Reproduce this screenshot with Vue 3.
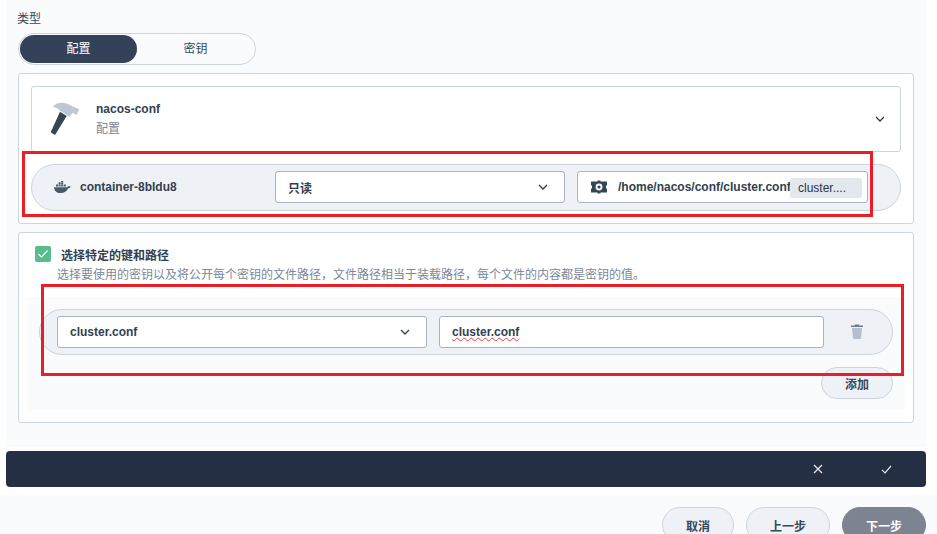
<script setup>
const desc = '选择要使用的密钥以及将公开每个密钥的文件路径，文件路径相当于装载路径，每个文件的内容都是密钥的值。'
</script>

<template>
  <div class="page">
    <div class="panel">
      <div class="label">类型</div>
      <div class="switch">
        <div class="seg on">配置</div>
        <div class="seg">密钥</div>
      </div>

      <section class="card first">
        <div class="head">
          <svg class="hammer" width="32" height="36" viewBox="0 0 32 36">
            <path d="M2.700 5.700 C5 3 8.500 1.700 11.700 1.700 C15.500 1.700 19 3 21.700 5 L29.300 8.300 L26.700 14 L22.700 11.700 L19.300 15.700 L10 9.700 C8 7.500 5.500 6 2.700 5.700Z" fill="#bdc8d4"/>
            <path d="M10 10.700 L16.700 15 L5 34 L0.700 31.300Z" fill="#344554"/>
          </svg>
          <div class="titles">
            <div class="name">nacos-conf</div>
            <div class="kind">配置</div>
          </div>
          <svg class="chev far" width="10" height="6" viewBox="0 0 10 6"><path d="M1 1 L5 5 L9 1" /></svg>
        </div>

        <div class="row mount">
          <svg class="docker" width="17" height="12" viewBox="0 0 17 12">
            <path d="M0 6.200 H13.200 C13.500 5.200 14.800 4.900 16.800 5.500 C16 7 15 7.400 14 7.500 C12.800 10.400 10.300 12 6.600 12 C2.600 12 0.400 10 0 6.200Z" fill="#4a5868"/>
            <path d="M2 3.600h2v2H2zM4.600 3.600h2v2h-2zM7.200 3.600h2v2h-2zM9.800 3.600h2v2h-2zM4.600 1.200h2v2h-2zM7.200 1.200h2v2h-2zM7.200 -1h2v2h-2z" fill="#4a5868"/>
          </svg>
          <div class="cname">container-8bldu8</div>
          <div class="field sel access">
            <span>只读</span>
            <svg class="chev" width="10" height="6" viewBox="0 0 10 6"><path d="M1 1 L5 5 L9 1" /></svg>
          </div>
          <div class="field path">
            <svg class="gear" width="16" height="14" viewBox="0 0 16 14">
              <path fill-rule="evenodd" d="M0 1.500H6.500V0.500H9.500V1.500H16V5.500H15V8.500H16V12.500H9.500V13.500H6.500V12.500H0V8.500H1V5.500H0ZM8 3.600A3.400 3.400 0 1 0 8 10.400A3.400 3.400 0 1 0 8 3.600ZM8 5.400A1.600 1.600 0 1 1 8 8.600A1.600 1.600 0 1 1 8 5.400Z" fill="#344554"/>
            </svg>
            <span class="ptext">/home/nacos/conf/cluster.conf</span>
            <span class="tag">cluster....</span>
          </div>
        </div>
      </section>

      <section class="card second">
        <div class="check-row">
          <span class="check">
            <svg width="12" height="10" viewBox="0 0 12 10"><path d="M1.500 5 L4.500 8 L10.500 1.500" /></svg>
          </span>
          <span class="check-label">选择特定的键和路径</span>
        </div>
        <div class="desc">{{ desc }}</div>
        <div class="sub">
          <div class="row keyrow">
            <div class="field sel key">
              <span>cluster.conf</span>
              <svg class="chev" width="10" height="6" viewBox="0 0 10 6"><path d="M1 1 L5 5 L9 1" /></svg>
            </div>
            <div class="field file"><span class="squiggle">cluster.conf</span></div>
            <svg class="trash" width="12" height="15" viewBox="0 0 12 15">
              <path d="M4.200 0.500H7.800L8.300 1.600H12V3H0V1.600H3.700Z" fill="#6e7a87"/>
              <path d="M1 4H11L10 14C10 14.600 9.500 15 9 15H3C2.500 15 2 14.600 2 14Z" fill="#b4bfcb"/>
            </svg>
          </div>
          <div class="add-line"><button class="btn add">添加</button></div>
        </div>
      </section>
    </div>

    <div class="bar">
      <svg class="bar-x" width="10" height="10" viewBox="0 0 10 10"><path d="M1 1 L9 9 M9 1 L1 9" /></svg>
      <svg class="bar-ok" width="11" height="9" viewBox="0 0 11 9"><path d="M1 4.800 L4 7.800 L10 1" /></svg>
    </div>

    <div class="footer">
      <button class="btn cancel">取消</button>
      <button class="btn prev">上一步</button>
      <button class="btn next">下一步</button>
    </div>

    <div class="mark mark-a"></div>
    <div class="mark mark-b"></div>
  </div>
</template>

<style>
html, body { margin: 0; background: #fff; overflow: hidden; }
</style>

<style scoped>
.page {
  position: relative;
  width: 937px;
  height: 534px;
  overflow: hidden;
  background: #fff;
  font-family: "Liberation Sans", "Noto Sans CJK SC", sans-serif;
  color: #2a3646;
}
.panel {
  margin: 0 11px 0 6px;
  height: 447px;
  box-sizing: border-box;
  padding: 12px 12px 0;
  background: #fafbfd;
}
.label { font-size: 12px; line-height: 14px; height: 14px; margin-left: -1px; color: #3a4757; }
.switch {
  display: flex;
  box-sizing: border-box;
  width: 238px;
  height: 32px;
  margin-top: 7px;
  padding: 1px;
  border: 1px solid #ccd4de;
  border-radius: 16px;
}
.seg {
  width: 117px;
  font-size: 12px;
  line-height: 28px;
  text-align: center;
  color: #3a4757;
  border-radius: 14px;
}
.seg.on { background: #344259; color: #fff; }
.card {
  box-sizing: border-box;
  width: 896px;
  background: #fff;
  border: 1px solid #ccd4de;
  border-radius: 3px;
}
.first { height: 151px; margin-top: 8px; padding: 12px; }
.second { height: 191px; margin-top: 8px; padding: 13px 8px 0; }
.head {
  display: flex;
  align-items: center;
  box-sizing: border-box;
  height: 66px;
  padding: 0 15px 0 18px;
  border: 1px solid #ccd4de;
  border-radius: 3px;
}
.hammer { flex: none; }
.titles { margin-left: 14px; flex: 1; margin-top: -1px; }
.name { font-size: 12px; line-height: 16px; font-weight: 700; color: #323f50; }
.kind { font-size: 12px; line-height: 16px; margin-top: 4px; color: #7c8798; }
.chev { fill: none; stroke: #2f3c4c; stroke-width: 1.3; flex: none; }
.row {
  display: flex;
  align-items: center;
  box-sizing: border-box;
  height: 46px;
  background: #eef2f7;
  border: 1px solid #ccd4de;
  border-radius: 23px;
}
.mount { margin-top: 12px; height: 47px; border-radius: 24px; padding: 0 32px 1px 22px; }
.docker { flex: none; }
.cname { width: 195px; margin-left: 9px; font-size: 12px; font-weight: 700; color: #323f50; }
.field {
  display: flex;
  align-items: center;
  box-sizing: border-box;
  height: 32px;
  background: #fff;
  border: 1px solid #a9b2c0;
  border-radius: 3px;
  font-size: 12px;
  font-weight: 700;
  color: #323f50;
}
.sel { justify-content: space-between; padding: 0 16px 0 12px; }
.access { width: 290px; }
.path { width: 291px; margin-left: 12px; padding-left: 13px; position: relative; overflow: hidden; }
.gear { flex: none; }
.ptext { margin-left: 11px; white-space: nowrap; }
.tag {
  position: absolute;
  left: 212px;
  top: 6px;
  width: 72px;
  height: 20px;
  box-sizing: border-box;
  padding-left: 8px;
  background: #e3e7ee;
  border-radius: 2px;
  font-weight: 400;
  line-height: 21px;
  color: #2a3646;
}
.check-row { display: flex; align-items: center; height: 16px; }
.check {
  display: flex;
  align-items: center;
  justify-content: center;
  width: 16px;
  height: 16px;
  background: #58bc8b;
  border-radius: 2px;
  margin-left: 8px;
}
.check svg { fill: none; stroke: #fff; stroke-width: 1.2; }
.check-label { margin-left: 10px; font-size: 12px; font-weight: 700; color: #323f50; }
.desc { margin: 5px 0 0 30px; font-size: 12px; line-height: 16px; color: #7c8798; white-space: nowrap; }
.sub {
  height: 113px;
  margin-top: 14px;
  box-sizing: border-box;
  padding: 12px 12px 0;
  background: #fafbfd;
  border-radius: 3px;
}
.keyrow { padding: 0 0 0 17px; }
.key { width: 370px; }
.file { width: 385px; margin-left: 12px; padding-left: 12px; }
.squiggle { text-decoration: underline wavy #e8403f 1px; text-underline-offset: 1px; }
.trash { margin-left: 27px; margin-top: -2px; flex: none; }
.add-line { display: flex; justify-content: flex-end; margin-top: 12px; }
.btn {
  box-sizing: border-box;
  height: 32px;
  padding: 0;
  background: #eef2f7;
  border: 1px solid #ccd4de;
  border-radius: 16px;
  font: 700 12px "Liberation Sans", "Noto Sans CJK SC", sans-serif;
  color: #3a4757;
}
.add { width: 72px; }
.bar {
  display: flex;
  align-items: center;
  box-sizing: border-box;
  height: 36px;
  margin: 4px 11px 0 6px;
  padding-left: 807px;
  background: #242f44;
  border-radius: 4px;
}
.bar svg { fill: none; stroke: #e8ebef; stroke-width: 1.2; }
.bar-ok { margin-left: 58px; }
.footer {
  display: flex;
  justify-content: flex-end;
  gap: 12px;
  height: 39px;
  margin-top: 8px;
  padding: 12px 11px 0 0;
  box-sizing: border-box;
  background: #fafbfd;
  overflow: hidden;
}
.footer .btn { flex: none; height: 36px; border-radius: 18px; }
.cancel { width: 72px; }
.prev { width: 84px; }
.next { width: 84px; background: #7e8392; border-color: #7e8392; color: #fff; }
.mark { position: absolute; border: 3px solid #ee1c25; box-sizing: border-box; pointer-events: none; }
.mark-a { left: 22px; top: 151px; width: 851px; height: 66px; }
.mark-b { left: 41px; top: 284px; width: 863px; height: 92px; }
</style>
